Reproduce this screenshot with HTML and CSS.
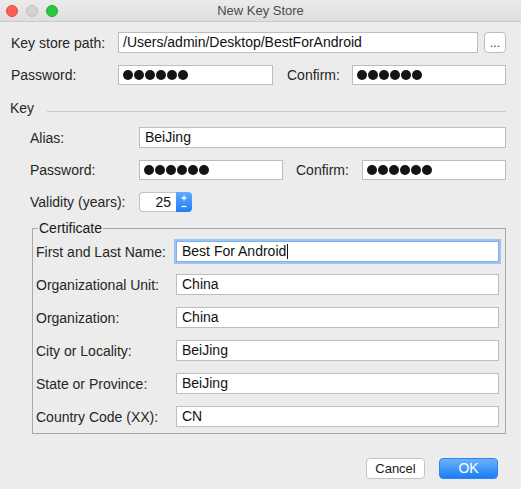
FILE: index.html
```html
<!DOCTYPE html>
<html>
<head>
<meta charset="utf-8">
<link rel="stylesheet" href="styles.css">
</head>
<body>
<div class="window">
  <div class="titlebar">
    <div class="lights">
      <span class="light red"></span>
      <span class="light gray"></span>
      <span class="light green"></span>
    </div>
    <div class="title">New Key Store</div>
  </div>
  <div class="content">
    <div class="row r-path">
      <label class="lbl w-top">Key store path:</label>
      <div class="field f-path">/Users/admin/Desktop/BestForAndroid</div>
      <div class="browse">...</div>
    </div>
    <div class="row r-pass">
      <label class="lbl w-top">Password:</label>
      <div class="field pw f-pass"><i></i><i></i><i></i><i></i><i></i><i></i></div>
      <label class="lbl w-confirm">Confirm:</label>
      <div class="field pw f-confirm"><i></i><i></i><i></i><i></i><i></i><i></i></div>
    </div>

    <div class="section-head">
      <span>Key</span>
      <span class="rule"></span>
    </div>

    <div class="key">
      <div class="row r-alias">
        <label class="lbl w-key">Alias:</label>
        <div class="field f-alias">BeiJing</div>
      </div>
      <div class="row r-kpass">
        <label class="lbl w-key">Password:</label>
        <div class="field pw f-kpass"><i></i><i></i><i></i><i></i><i></i><i></i></div>
        <label class="lbl w-kconfirm">Confirm:</label>
        <div class="field pw f-kconfirm"><i></i><i></i><i></i><i></i><i></i><i></i></div>
      </div>
      <div class="row r-valid">
        <label class="lbl w-key">Validity (years):</label>
        <div class="spinner">
          <div class="spin-val">25</div>
          <div class="spin-btn">
            <svg width="16" height="20" viewBox="0 0 16 20">
              <path d="M8 3.5v5M5.5 6h5" stroke="#fff" stroke-width="1.3" fill="none"/>
              <path d="M5.5 14.5h5" stroke="#fff" stroke-width="1.3" fill="none"/>
            </svg>
          </div>
        </div>
      </div>
    </div>

    <fieldset class="cert">
      <legend>Certificate</legend>
      <div class="crow">
        <label class="lbl w-cert">First and Last Name:</label>
        <div class="field f-cert focus">Best For Android<span class="caret"></span></div>
      </div>
      <div class="crow">
        <label class="lbl w-cert">Organizational Unit:</label>
        <div class="field f-cert">China</div>
      </div>
      <div class="crow">
        <label class="lbl w-cert">Organization:</label>
        <div class="field f-cert">China</div>
      </div>
      <div class="crow">
        <label class="lbl w-cert">City or Locality:</label>
        <div class="field f-cert">BeiJing</div>
      </div>
      <div class="crow">
        <label class="lbl w-cert">State or Province:</label>
        <div class="field f-cert">BeiJing</div>
      </div>
      <div class="crow">
        <label class="lbl w-cert">Country Code (XX):</label>
        <div class="field f-cert">CN</div>
      </div>
    </fieldset>

    <div class="buttons">
      <div class="btn cancel">Cancel</div>
      <div class="btn ok">OK</div>
    </div>
  </div>
</div>
</body>
</html>
```

FILE: styles.css
```css
html, body {
  margin: 0;
  padding: 0;
}
body {
  background: #ececec;
  font-family: "Liberation Sans", Arial, sans-serif;
  font-size: 14px;
  color: #222;
  width: 521px;
  height: 489px;
  overflow: hidden;
}
.window {
  width: 521px;
  height: 489px;
  background: #ececec;
}
.titlebar {
  height: 21px;
  border-bottom: 1px solid #c9c9c9;
  background: linear-gradient(#ebebeb, #dedede);
  display: flex;
  align-items: center;
  position: relative;
}
.lights {
  display: flex;
  gap: 8px;
  padding-left: 6px;
  margin-top: 1px;
}
.light {
  width: 12px;
  height: 12px;
  border-radius: 50%;
  box-sizing: border-box;
}
.light.red { background: #fc5f57; border: 1px solid #e2463f; }
.light.gray { background: #d2d2d2; border: 1px solid #c2c2c2; }
.light.green { background: #2ac840; border: 1px solid #1eaa2f; }
.title {
  position: absolute;
  left: 0;
  right: 0;
  top: 3px;
  text-align: center;
  color: #4a4a4a;
  font-size: 13px;
  line-height: 16px;
}
.content {
  padding: 10px 15px 0 10px;
}
.row {
  display: flex;
  align-items: center;
}
.lbl {
  display: block;
  box-sizing: border-box;
  white-space: nowrap;
  color: #262626;
}
.field {
  box-sizing: border-box;
  background: #fff;
  border: 1px solid #bdbdbd;
  height: 21px;
  line-height: 19px;
  padding-left: 4px;
  color: #111;
  white-space: nowrap;
  overflow: hidden;
}
.field.pw {
  display: flex;
  align-items: center;
  gap: 1px;
}
.field.pw i {
  display: block;
  width: 10px;
  height: 10px;
  border-radius: 50%;
  background: #141414;
}
.r-path { height: 21px; }
.r-pass { height: 20px; margin-top: 12px; }
.r-pass .field { height: 20px; }
.w-top { width: 108px; padding-left: 1px; }
.f-path { width: 360px; }
.browse {
  box-sizing: border-box;
  width: 22px;
  height: 21px;
  margin-left: 6px;
  background: #fff;
  border: 1px solid #bdbdbd;
  border-radius: 4px;
  text-align: center;
  line-height: 21px;
  font-size: 12px;
  color: #333;
}
.f-pass { width: 155px; }
.w-confirm { width: 65px; margin-left: 14px; }
.f-confirm { width: 154px; }

.section-head {
  display: flex;
  align-items: center;
  height: 16px;
  line-height: 16px;
  margin-top: 15px;
  color: #262626;
}
.rule {
  flex: 1;
  height: 1px;
  background: #c9c9c9;
  margin-left: 13px;
  margin-top: 6px;
}

.key {
  padding-left: 20px;
}
.r-alias { margin-top: 11px; height: 21px; }
.w-key { width: 109px; }
.f-alias { width: 367px; padding-left: 5px; }
.r-kpass { margin-top: 12px; height: 20px; }
.r-kpass .field { height: 20px; }
.f-kpass { width: 144px; }
.w-kconfirm { width: 66px; margin-left: 13px; }
.f-kconfirm { width: 144px; }
.r-valid { margin-top: 12px; height: 20px; }
.spinner {
  display: flex;
  height: 20px;
}
.spin-val {
  box-sizing: border-box;
  width: 37px;
  height: 20px;
  background: #fff;
  border: 1px solid #c4c4c4;
  border-right: none;
  border-radius: 4px 0 0 4px;
  text-align: right;
  padding-right: 5px;
  line-height: 18px;
  font-size: 14px;
  color: #111;
}
.spin-btn {
  width: 16px;
  height: 20px;
  border-radius: 0 4px 4px 0;
  background: linear-gradient(#5ea9fc, #1f7ff5);
}
.spin-btn svg { display: block; }

.cert {
  margin: 8px 0 0 22px;
  padding: 0 6px 6px 3px;
  border: 1px solid #a9a9a9;
  min-width: 0;
}
.cert legend {
  padding: 0 1px;
  margin-left: 2px;
  line-height: 16px;
  color: #1a1a1a;
}
.crow {
  display: flex;
  align-items: center;
  height: 21px;
  margin-top: 12px;
}
.crow:first-of-type { margin-top: 5px; }
.w-cert { width: 140px; }
.f-cert { width: 323px; padding-left: 5px; }
.f-cert.focus {
  border-color: #7fb0ee;
  box-shadow: 0 0 0 2px #9cc3f2;
}
.caret {
  display: inline-block;
  width: 1px;
  height: 15px;
  background: #111;
  vertical-align: -3px;
  margin-left: 1px;
}

.buttons {
  display: flex;
  justify-content: flex-end;
  gap: 14px;
  margin-top: 24px;
  padding-right: 8px;
}
.btn {
  box-sizing: border-box;
  width: 59px;
  height: 21px;
  border-radius: 4px;
  text-align: center;
  line-height: 19px;
  font-size: 13px;
}
.cancel {
  background: #fff;
  border: 1px solid #c3c3c3;
  color: #1a1a1a;
}
.ok {
  background: linear-gradient(#6cb2fc, #1a7cf4);
  border: 1px solid #2f86f2;
  color: #fff;
  font-size: 14px;
}
```
